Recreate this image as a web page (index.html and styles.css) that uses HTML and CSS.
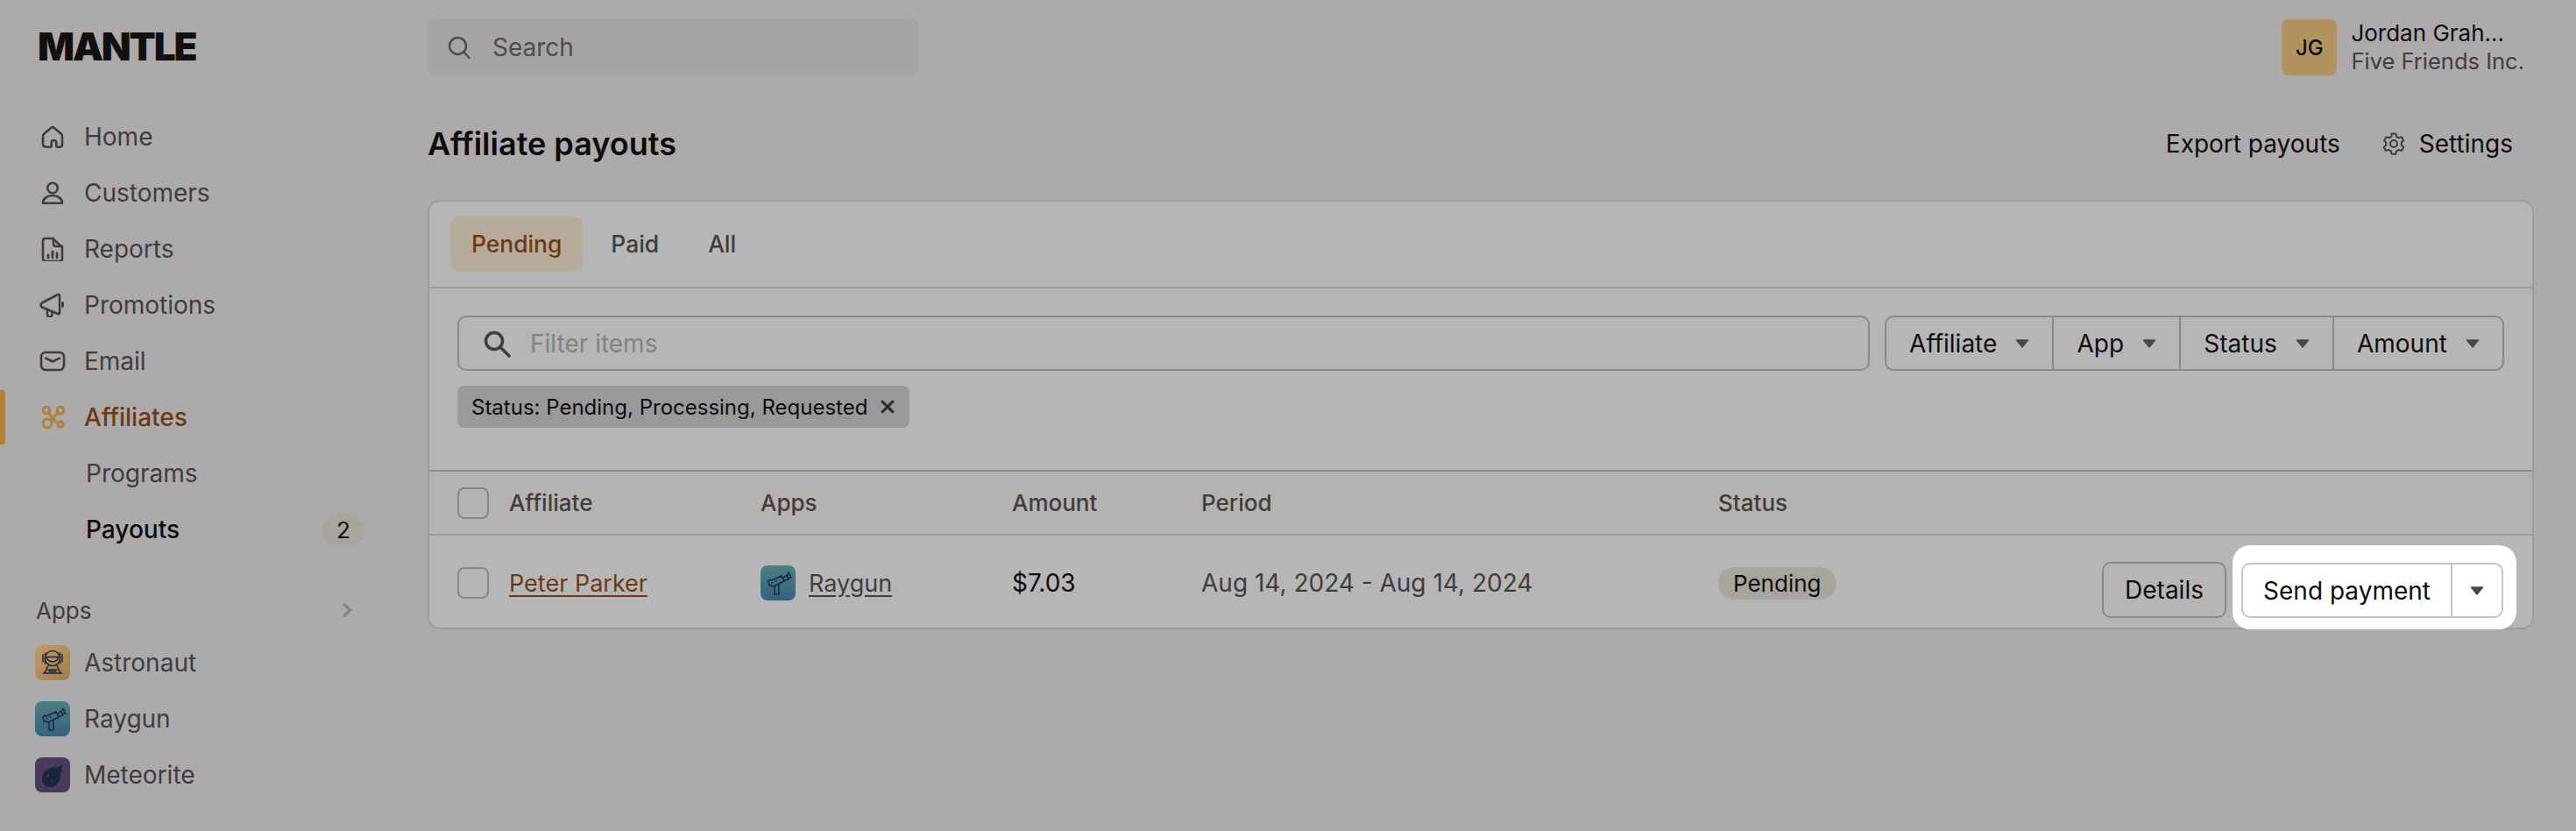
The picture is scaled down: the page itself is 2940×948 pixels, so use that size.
FILE: index.html
```html
<!DOCTYPE html>
<html lang="en">
<head>
    <meta charset="UTF-8">
    <meta name="viewport" content="width=device-width, initial-scale=1.0">
    <title>Affiliate payouts</title>
    <link rel="stylesheet" href="styles.css">
</head>
<body>
    <svg class="defs" width="0" height="0">
        <symbol id="caret" viewBox="0 0 16 10"><path d="M1.5 1h13L8 9z" fill="currentColor" stroke="currentColor" stroke-width="1.5" stroke-linejoin="round"/></symbol>
        <symbol id="raygun" viewBox="0 0 40 40" fill="none" stroke="#1b2740" stroke-width="1.5" stroke-linejoin="round" stroke-linecap="round">
            <path d="M9 18l2 -2 2 1 11-5 3 6-12 6-3-1-2 0z"/>
            <path d="M16 24l0 9 5 0 0-11"/>
            <path d="M26 14l4-3 0 2 2-5 3 6-4 0 1 2-4 1"/>
            <path d="M13 20h1M17 18h1"/>
        </symbol>
    </svg>

    <aside class="sidebar">
        <div class="logo">MANTLE</div>
        <nav class="nav">
            <a class="nav-item">
                <svg class="nav-icon" viewBox="0 0 28 28"><path d="M3 23V13.500c0-1.200.5-2.200 1.400-3L12 4c1.200-1 2.800-1 4 0l7.600 6.500c.9.800 1.400 1.800 1.400 3V23c0 1.700-1 2.700-2.500 2.700h-3c-.8 0-1.200-.5-1.200-1.200V21c0-1.800-1.300-3-2.800-3s-2.800 1.200-2.800 3v3.500c0 .7-.4 1.200-1.200 1.200h-3C4 25.700 3 24.700 3 23z"/></svg>
                Home
            </a>
            <a class="nav-item">
                <svg class="nav-icon" viewBox="0 0 28 28"><circle cx="14" cy="8.500" r="5.800"/><path d="M3 25.500c0-5 5-8.500 11-8.500s11 3.500 11 8.500c0 .2-.2.300-.4.300H3.400c-.2 0-.4-.1-.4-.3z"/></svg>
                Customers
            </a>
            <a class="nav-item">
                <svg class="nav-icon" viewBox="0 0 28 28"><path d="M3 5c0-2 1-3 3-3h8l11 10v13c0 2-1 3-3 3H6c-2 0-3-1-3-3z"/><path d="M15 2v6c0 2 1 3 3 3h7"/><path class="bars" d="M9 21v3M14 17v7M19 19v5"/></svg>
                Reports
            </a>
            <a class="nav-item">
                <svg class="nav-icon nav-icon-wide" viewBox="0 0 30 28"><path d="M3 11.500l18-9.500c1-.5 2 0 2 1.200v19.600c0 1.200-1 1.700-2 1.200L3 16.500c-2-1-2-4 0-5z"/><path d="M9 19v5.500c0 2 1 3 2.700 3s2.800-1 2.800-3V22"/><path class="bars" d="M26.500 11.500v4"/></svg>
                Promotions
            </a>
            <a class="nav-item">
                <svg class="nav-icon nav-icon-wide" viewBox="0 0 30 28"><rect x="2" y="4" width="26" height="20" rx="5"/><path d="M7 10.500l8 4 8-4"/></svg>
                Email
            </a>
            <a class="nav-item nav-item-active">
                <svg class="nav-icon" viewBox="0 0 28 28"><circle cx="7" cy="6" r="3.800"/><circle cx="23" cy="6" r="3.800"/><circle cx="23" cy="22" r="3"/><circle cx="8" cy="21" r="5"/><path d="M9.500 9l8 10M20.500 8.500L12 17"/></svg>
                Affiliates
            </a>
            <a class="nav-sub">Programs</a>
            <a class="nav-sub nav-sub-active">Payouts <span class="count">2</span></a>
        </nav>
        <div class="apps-head">
            Apps
            <svg class="chevron" viewBox="0 0 12 18"><path d="M2 2l8 7-8 7"/></svg>
        </div>
        <a class="app-item">
            <span class="app-icon app-astronaut">
                <svg viewBox="0 0 40 40" fill="none" stroke="#1b2740" stroke-width="1.500" stroke-linecap="round">
                    <circle cx="20" cy="15" r="8.500"/><path d="M13.500 13.500h13c0 3-3 5.500-6.500 5.500s-6.500-2.500-6.500-5.500z"/>
                    <path d="M9 11v8M31 11v8M11.500 9v12M28.500 9v12"/>
                    <path d="M15 23l-3 7-2 2h20l-2-2-3-7"/><path d="M15 28h10M16 30h8"/>
                </svg>
            </span>
            Astronaut
        </a>
        <a class="app-item">
            <span class="app-icon app-raygun"><svg viewBox="0 0 40 40"><use href="#raygun"/></svg></span>
            Raygun
        </a>
        <a class="app-item">
            <span class="app-icon app-meteorite">
                <svg viewBox="0 0 40 40"><path d="M8 24c0-5 3-9 8-11 3-1 6-2 8-4l-1 4 9-5-3 7 3-1-4 6 2 0c-1 2-2 5-3 8-2 4-6 6-10 6-5 0-9-4-9-10z" fill="#1a2440"/><circle cx="15" cy="21" r="1.500" fill="#4a3a5e"/><circle cx="19" cy="27" r="1" fill="#4a3a5e"/></svg>
            </span>
            Meteorite
        </a>
    </aside>

    <main class="main">
        <header class="topbar">
            <div class="search">
                <svg class="search-icon" viewBox="0 0 26 26"><circle cx="11.500" cy="11.500" r="9.500"/><path d="M18.500 18.500l6 6.500"/></svg>
                Search
            </div>
            <div class="user">
                <span class="avatar">JG</span>
                <div class="user-text">
                    <div class="user-name">Jordan Grah...</div>
                    <div class="user-org">Five Friends Inc.</div>
                </div>
            </div>
        </header>

        <div class="page-head">
            <h1>Affiliate payouts</h1>
            <div class="page-actions">
                <a class="page-action">Export payouts</a>
                <a class="page-action">
                    <svg class="gear" viewBox="0 0 28 28"><circle cx="14" cy="14" r="4"/><path d="M11.700 2.500h4.600l.8 3.300 2.600 1.500 3.300-1 2.300 4-2.500 2.300v3l2.500 2.300-2.300 4-3.300-1-2.600 1.500-.8 3.300h-4.600l-.8-3.300-2.600-1.500-3.300 1-2.300-4 2.500-2.300v-3L3.100 10.300l2.300-4 3.300 1 2.600-1.500z"/></svg>
                    Settings
                </a>
            </div>
        </div>

        <section class="card">
            <div class="tabs">
                <a class="tab tab-active">Pending</a>
                <a class="tab">Paid</a>
                <a class="tab">All</a>
            </div>
            <div class="filters">
                <div class="filter-row">
                    <div class="filter-input">
                        <svg class="filter-icon" viewBox="0 0 32 32"><circle cx="13" cy="13" r="9.500"/><path d="M20 20l10 10"/></svg>
                        Filter items
                    </div>
                    <div class="filter-group">
                        <button class="filter-btn">Affiliate <svg class="caret"><use href="#caret"/></svg></button>
                        <button class="filter-btn">App <svg class="caret"><use href="#caret"/></svg></button>
                        <button class="filter-btn">Status <svg class="caret"><use href="#caret"/></svg></button>
                        <button class="filter-btn">Amount <svg class="caret"><use href="#caret"/></svg></button>
                    </div>
                </div>
                <div class="tag">
                    Status: Pending, Processing, Requested
                    <svg class="tag-x" viewBox="0 0 16 16"><path d="M2 2l12 12M14 2L2 14"/></svg>
                </div>
            </div>
            <div class="row row-head">
                <span class="checkbox"></span>
                <span>Affiliate</span>
                <span>Apps</span>
                <span>Amount</span>
                <span>Period</span>
                <span>Status</span>
            </div>
            <div class="row row-body">
                <span class="checkbox"></span>
                <a class="link link-brown">Peter Parker</a>
                <span class="app-cell">
                    <span class="app-icon app-raygun"><svg viewBox="0 0 40 40"><use href="#raygun"/></svg></span>
                    <a class="link">Raygun</a>
                </span>
                <span class="amount">$7.03</span>
                <span>Aug 14, 2024 - Aug 14, 2024</span>
                <span class="status-cell">
                    <span class="badge">Pending</span>
                    <span class="row-actions">
                        <button class="details-btn">Details</button>
                        <span class="spotlight">
                            <span class="send-group">
                                <button class="send-btn">Send payment</button>
                                <button class="send-more"><svg class="caret"><use href="#caret"/></svg></button>
                            </span>
                        </span>
                    </span>
                </span>
            </div>
        </section>
    </main>
</body>
</html>
```

FILE: styles.css
```css
* {
    box-sizing: border-box;
}

html, body {
    height: 100%;
}

body {
    margin: 0;
    display: flex;
    overflow: hidden;
    background: #acaaab;
    color: #0d0c0c;
    font-family: Inter, "Liberation Sans", sans-serif;
    font-size: 28px;
}

.defs {
    position: absolute;
}

button {
    font: inherit;
    color: inherit;
    background: none;
    border: none;
    padding: 0;
}

svg {
    flex: none;
}

/* sidebar */
.sidebar {
    width: 488px;
    flex: none;
    padding: 28px 0 0;
    color: #403d3c;
}

.logo {
    margin-left: 43px;
    height: 50px;
    line-height: 50px;
    font-size: 44px;
    font-weight: 900;
    color: #11100f;
    letter-spacing: -2.1px;
}

.nav {
    margin-top: 46px;
}

.nav-item, .nav-sub {
    display: flex;
    align-items: center;
    height: 64px;
}

.nav-item {
    padding-left: 46px;
    gap: 22px;
}

.nav-icon {
    width: 28px;
    height: 28px;
    fill: none;
    stroke: currentColor;
    stroke-width: 2.600;
    stroke-linejoin: round;
    stroke-linecap: round;
}

.nav-icon-wide {
    width: 30px;
    margin: 0 -1px;
}

.nav-icon .bars {
    stroke-width: 2.800;
}

.nav-item-active {
    position: relative;
    color: #6b3a14;
    font-weight: 500;
}

.nav-item-active .nav-icon {
    color: #b07f38;
    stroke-width: 3;
}

.nav-item-active::before {
    content: "";
    position: absolute;
    left: 0;
    top: 1px;
    width: 6px;
    height: 62px;
    background: #b5812f;
    border-radius: 0 3px 3px 0;
}

.nav-sub {
    padding-left: 98px;
    padding-right: 72px;
    justify-content: space-between;
}

.nav-sub-active {
    color: #0d0c0c;
    font-weight: 500;
}

.count {
    width: 48px;
    height: 37px;
    line-height: 37px;
    border-radius: 19px;
    background: #a8a69c;
    text-align: center;
    font-size: 26px;
    font-weight: 400;
}

.apps-head {
    display: flex;
    align-items: center;
    justify-content: space-between;
    height: 56px;
    margin-top: 32px;
    padding: 0 86px 0 41px;
    font-size: 26px;
}

.chevron {
    width: 12px;
    height: 18px;
    fill: none;
    stroke: #858383;
    stroke-width: 3;
}

.app-item {
    display: flex;
    align-items: center;
    height: 64px;
    gap: 16px;
    padding-left: 40px;
}

.app-icon {
    display: block;
    width: 40px;
    height: 40px;
    border-radius: 8px;
}

.app-icon svg {
    display: block;
    width: 100%;
    height: 100%;
}

.app-astronaut {
    background: linear-gradient(135deg, #c09c6c, #a67c45);
}

.app-raygun {
    background: linear-gradient(#4a8082, #34627f);
}

.app-meteorite {
    background: #4a3a5e;
}

/* main column */
.main {
    flex: 1;
    min-width: 0;
    padding-right: 48px;
}

.topbar {
    display: flex;
    align-items: center;
    justify-content: space-between;
    height: 108px;
}

.search {
    display: flex;
    align-items: center;
    gap: 25px;
    width: 560px;
    height: 64px;
    padding-left: 23px;
    background: #a5a3a4;
    border-radius: 8px;
    color: #4f4d4c;
}

.search-icon {
    width: 26px;
    height: 26px;
    fill: none;
    stroke: currentColor;
    stroke-width: 2.400;
    stroke-linecap: round;
}

.user {
    display: flex;
    align-items: center;
    gap: 16px;
    margin-right: 11px;
}

.avatar {
    display: flex;
    align-items: center;
    justify-content: center;
    width: 63px;
    height: 64px;
    border-radius: 8px;
    background: #b19360;
    font-size: 24px;
    font-weight: 500;
}

.user-name, .user-org {
    font-size: 26px;
    line-height: 32px;
}

.user-org {
    font-size: 25.500px;
    color: #403d3c;
}

.page-head {
    display: flex;
    align-items: center;
    justify-content: space-between;
    height: 120px;
    padding-bottom: 8px;
}

h1 {
    margin: 0;
    font-size: 36px;
    font-weight: 600;
}

.page-actions {
    display: flex;
    align-items: center;
    gap: 47px;
    margin-right: 24px;
}

.page-action {
    display: flex;
    align-items: center;
    gap: 15px;
}

.gear {
    width: 28px;
    height: 28px;
    fill: none;
    stroke: #403d3c;
    stroke-width: 2;
    stroke-linejoin: round;
}

/* card */
.card {
    background: #b6b6b6;
    border: 2px solid #9e9c9c;
    border-radius: 14px;
}

.tabs {
    display: flex;
    gap: 8px;
    height: 99px;
    padding: 17px 24px 18px;
    border-bottom: 2px solid #9e9c9c;
}

.tab {
    display: flex;
    align-items: center;
    padding: 0 24px;
    border-radius: 10px;
    font-size: 26.400px;
    font-weight: 500;
    color: #403d3c;
}

.tab-active {
    background: #b6aa9b;
    color: #6b3a14;
}

.filters {
    height: 207px;
    padding: 31px 32px 0;
}

.filter-row {
    display: flex;
    gap: 17px;
}

.filter-input {
    flex: 1;
    display: flex;
    align-items: center;
    gap: 22px;
    height: 63px;
    padding-left: 27px;
    border: 2px solid #8c8a86;
    border-radius: 10px;
    color: #838282;
}

.filter-icon {
    width: 32px;
    height: 32px;
    fill: none;
    stroke: #403d3c;
    stroke-width: 3.600;
    stroke-linecap: round;
}

.filter-group {
    display: flex;
    width: 707px;
    height: 63px;
    border: 2px solid #8c8a86;
    border-radius: 10px;
}

.filter-btn {
    flex: auto;
    display: flex;
    align-items: center;
    justify-content: center;
    gap: 21px;
    border-left: 2px solid #8c8a86;
}

.filter-btn:first-child {
    border-left: none;
}

.caret {
    width: 16px;
    height: 10px;
    color: #4a4846;
}

.tag {
    display: inline-flex;
    align-items: center;
    gap: 14px;
    height: 48px;
    margin-top: 17px;
    padding: 0 16px;
    background: #999;
    border-radius: 8px;
    font-size: 24px;
}

.tag-x {
    width: 18px;
    height: 18px;
    fill: none;
    stroke: #2e2d2c;
    stroke-width: 2.800;
}

.row {
    display: grid;
    grid-template-columns: 59px 287px 287px 216px 590px 1fr;
    align-items: center;
    padding-left: 32px;
}

.row-head {
    height: 75px;
    background: #b4b3b1;
    border-top: 2px solid #8f8c88;
    border-bottom: 2px solid #9e9c9c;
    color: #403d3c;
    font-size: 26px;
    font-weight: 500;
}

.row-body {
    height: 105px;
    padding-top: 3px;
    color: #403d3c;
}

.checkbox {
    display: block;
    width: 36px;
    height: 36px;
    border: 2px solid #878788;
    border-radius: 8px;
}

.link {
    font-size: 27px;
    text-decoration: underline;
    text-underline-offset: 4px;
}

.link-brown {
    color: #6b3a14;
}

.app-cell {
    display: flex;
    align-items: center;
    gap: 15px;
}

.amount {
    color: #0d0c0c;
}

.status-cell {
    display: flex;
    align-items: center;
    justify-content: space-between;
    align-self: stretch;
}

.badge {
    height: 37px;
    line-height: 37px;
    padding: 0 17px;
    border-radius: 19px;
    background: #a8a69c;
    color: #0d0c0c;
    font-size: 26px;
}

.row-actions {
    display: flex;
    align-items: flex-end;
    align-self: flex-end;
    gap: 7px;
    margin: 0 18px -2px 0;
}

.details-btn {
    width: 142px;
    height: 64px;
    margin-bottom: 13px;
    border: 2px solid #8c8a86;
    border-radius: 10px;
    color: #0d0c0c;
}

/* white cut-out around the tour target */
.spotlight {
    display: block;
    padding: 20px 15px 13px 10px;
    background: #fff;
    border-radius: 20px;
}

.send-group {
    display: flex;
    height: 63px;
    border: 2px solid #c8c4be;
    border-radius: 10px;
    color: #0d0c0c;
}

.send-btn {
    width: 239px;
    border-right: 2px solid #c8c4be;
}

.send-more {
    width: 56px;
    display: flex;
    align-items: center;
    justify-content: center;
}
```
